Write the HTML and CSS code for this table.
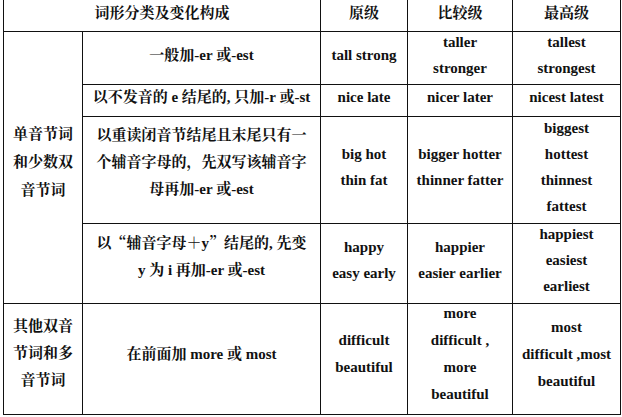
FILE: index.html
```html
<!DOCTYPE html>
<html lang="zh-CN">
<head>
<meta charset="utf-8">
<title>形容词比较级</title>
<link rel="stylesheet" href="styles.css">
</head>
<body>
<table class="grammar">
  <colgroup>
    <col class="c-type">
    <col class="c-rule">
    <col class="c-base">
    <col class="c-comp">
    <col class="c-super">
  </colgroup>
  <tr class="r-head">
    <th colspan="2">词形分类及变化构成</th>
    <th>原级</th>
    <th>比较级</th>
    <th>最高级</th>
  </tr>
  <tr class="r-1">
    <td rowspan="4" class="type"><span class="t">单音节词<br>和少数双<br>音节词</span></td>
    <td><span class="t">一般加-er 或-est</span></td>
    <td><span class="t">tall strong</span></td>
    <td><span class="t">taller<br>stronger</span></td>
    <td><span class="t">tallest<br>strongest</span></td>
  </tr>
  <tr class="r-2">
    <td><span class="t">以不发音的 e 结尾的, 只加-r 或-st</span></td>
    <td><span class="t">nice late</span></td>
    <td><span class="t">nicer later</span></td>
    <td><span class="t">nicest latest</span></td>
  </tr>
  <tr class="r-3">
    <td class="rule"><span class="t">以重读闭音节结尾且末尾只有一<br>个辅音字母的，先双写该辅音字<br>母再加-er 或-est</span></td>
    <td><span class="t">big hot<br>thin fat</span></td>
    <td><span class="t">bigger hotter<br>thinner fatter</span></td>
    <td><span class="t">biggest<br>hottest<br>thinnest<br>fattest</span></td>
  </tr>
  <tr class="r-4">
    <td class="rule"><span class="t">以<span class="cj">“</span>辅音字母<span class="cj">＋</span>y<span class="cj">”</span>结尾的, 先变<br>y 为 i 再加-er 或-est</span></td>
    <td><span class="t">happy<br>easy early</span></td>
    <td><span class="t">happier<br>easier earlier</span></td>
    <td><span class="t">happiest<br>easiest<br>earliest</span></td>
  </tr>
  <tr class="r-5">
    <td class="type tall"><span class="t">其他双音<br>节词和多<br>音节词</span></td>
    <td><span class="t">在前面加 more 或 most</span></td>
    <td><span class="t">difficult<br>beautiful</span></td>
    <td><span class="t">more<br>difficult ,<br>more<br>beautiful</span></td>
    <td><span class="t">most<br>difficult ,most<br>beautiful</span></td>
  </tr>
</table>
</body>
</html>
```

FILE: styles.css
```css
html, body {
  margin: 0;
  padding: 0;
  background: #ffffff;
}

body {
  padding-left: 3px;
  font-family: "Liberation Serif", "Noto Serif CJK SC", "Noto Sans CJK SC", serif;
  font-weight: bold;
  font-size: 15px;
  color: #111;
}

.grammar {
  border-collapse: collapse;
  table-layout: fixed;
  width: 617px;
  margin-top: -5px;
}

.c-type { width: 79px; }
.c-rule { width: 238px; }
.c-base { width: 87px; }
.c-comp { width: 105px; }
.c-super { width: 108px; }

.grammar th,
.grammar td {
  border: 1px solid #111;
  padding: 0;
  text-align: center;
  vertical-align: middle;
  line-height: 26px;
  font-family: "Liberation Serif", "Noto Serif CJK SC", "Noto Sans CJK SC", serif;
  font-weight: bold;
  font-size: 15px;
  white-space: nowrap;
}

.grammar th {
  line-height: 20px;
  padding-bottom: 1px;
}

.cj {
  font-family: "Noto Serif CJK SC", serif;
}

.t {
  display: block;
  margin-top: -7px;
}

.r-head { height: 36px; }
.r-1 { height: 53px; }
.r-2 { height: 32px; }
.r-3 { height: 107px; }
.r-4 { height: 80px; }
.r-5 { height: 111px; }

.r-5 .t {
  line-height: 27px;
  margin-top: -10px;
}

.grammar .rule {
  line-height: 27px;
}

.grammar .rule .t {
  margin-top: -16px;
}

.grammar .type {
  line-height: 28px;
}

.grammar .type .t {
  margin-top: -12px;
}

.grammar .type.tall {
  line-height: 29px;
}
```
